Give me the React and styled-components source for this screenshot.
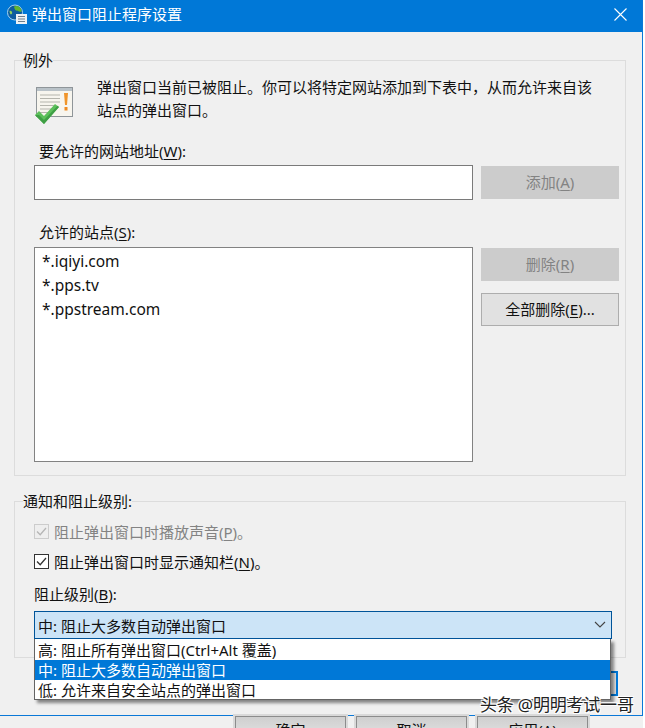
import React from 'react'
import styled, { createGlobalStyle } from 'styled-components'

const Global = createGlobalStyle`
  html, body { margin: 0; padding: 0; background: #fff; }
  body {
    width: 645px;
    height: 728px;
    overflow: hidden;
    font-family: "Noto Sans", "Noto Sans CJK SC", sans-serif;
    font-size: 15px;
    color: #111;
  }
  * { box-sizing: border-box; }
`

const Page = styled.div`
  position: relative;
  width: 645px;
  height: 728px;
  overflow: hidden;
`

const Dialog = styled.div`
  width: 643px;
  height: 716px;
  display: flex;
  flex-direction: column;
  background: #f0f0f0;
  border-right: 1px solid #0a78d7;
  border-bottom: 1px solid #0a78d7;
`

const TitleBar = styled.div`
  height: 32px;
  flex: none;
  display: flex;
  align-items: center;
  gap: 4px;
  padding: 0 15px 4px 7px;
  background: #0078d7;
  color: #fff;
`

const TitleText = styled.div`
  flex: 1;
  line-height: 28px;
`

const TitleIcon = styled.div`
  display: flex;
  width: 21px;
  height: 22px;
  flex: none;
  margin-top: 2px;
`

const Body = styled.div`
  display: flex;
  flex-direction: column;
  padding: 17px 16px 0 14px;
`

const Group = styled.fieldset`
  margin: 0;
  min-width: 0;
  border: 1px solid #dcdcdc;
  padding: ${({ $pad }) => $pad};
  height: ${({ $height }) => $height}px;
  margin-bottom: ${({ $after }) => $after || 0}px;
`

const Legend = styled.legend`
  padding: 0;
  margin-left: -11px;
  height: 22px;
  line-height: 22px;
`

const Intro = styled.div`
  display: flex;
  height: 44px;
`

const IntroIcon = styled.div`
  width: 63px;
  flex: none;
  padding-top: 7px;
`

const IntroText = styled.div`
  line-height: 23px;
  margin-top: -3px;
  width: 500px;
`

const Label = styled.div`
  line-height: 20px;
  margin-left: ${({ $left }) => $left || 0}px;
  margin-top: ${({ $top }) => $top || 0}px;
  margin-bottom: ${({ $bottom }) => $bottom || 0}px;
`

const Key = styled.span`
  text-decoration: underline;
  text-underline-offset: 2px;
  text-decoration-thickness: 1px;
`

const Row = styled.div`
  display: flex;
  gap: 8px;
  align-items: flex-start;
`

const TextBox = styled.div`
  width: 439px;
  height: 35px;
  flex: none;
  background: #fff;
  border: 1px solid #7a7a7a;
`

const ListBox = styled.div`
  width: 439px;
  height: 215px;
  flex: none;
  display: flex;
  flex-direction: column;
  padding: 1px 7px;
  background: #fff;
  border: 1px solid #828282;
`

const Site = styled.div`
  line-height: 24px;
  font-size: 15.5px;
`

const Side = styled.div`
  display: flex;
  flex-direction: column;
  gap: 12px;
  padding-top: 1px;
`

const Button = styled.div`
  width: 138px;
  height: 33px;
  display: flex;
  align-items: center;
  justify-content: center;
  padding-bottom: 2px;
  background: ${({ $off }) => ($off ? '#cccccc' : '#e1e1e1')};
  border: 1px solid ${({ $off }) => ($off ? '#cccccc' : '#adadad')};
  color: ${({ $off }) => ($off ? '#838383' : '#111')};
`

const CheckRow = styled.div`
  display: flex;
  align-items: center;
  gap: 5px;
  height: 16px;
  margin-bottom: ${({ $after }) => $after}px;
  color: ${({ $off }) => ($off ? '#838383' : '#111')};
`

const CheckBox = styled.div`
  width: 15px;
  height: 15px;
  flex: none;
  display: flex;
  align-items: center;
  justify-content: center;
  background: ${({ $off }) => ($off ? '#eeeeee' : '#fff')};
  border: 1px solid ${({ $off }) => ($off ? '#cccccc' : '#333')};
`

const ComboWrap = styled.div`
  position: relative;
  width: 578px;
`

const Combo = styled.div`
  height: 28px;
  display: flex;
  align-items: center;
  justify-content: space-between;
  padding: 0 5px 0 3px;
  background: #cce4f7;
  border: 1px solid #005499;
`

const Dropdown = styled.div`
  position: absolute;
  top: 28px;
  left: 0;
  width: 577px;
  height: 61px;
  display: flex;
  flex-direction: column;
  padding-top: 1px;
  background: #fff;
  border: 1px solid #646464;
  border-top: none;
  box-shadow: 3px 3px 3px rgba(0, 0, 0, 0.45);
  z-index: 2;
`

const Option = styled.div`
  height: 20px;
  flex: none;
  line-height: 20px;
  padding-left: 3px;
  background: ${({ $active }) => ($active ? '#0078d7' : 'transparent')};
  color: ${({ $active }) => ($active ? '#fff' : '#111')};
`

const Footer = styled.div`
  display: flex;
  justify-content: flex-end;
  padding: 13px 8px 0 0;
`

const DefaultButton = styled.div`
  width: 110px;
  height: 25px;
  background: #e1e1e1;
  border: 2px solid #0078d7;
`

const Behind = styled.div`
  height: 12px;
  width: 643px;
  display: flex;
  justify-content: flex-end;
  gap: 10px;
  padding-right: 55px;
  background: #f0f0f0;
`

const BehindButton = styled.div`
  width: 111px;
  height: 24px;
  padding-top: 3px;
  text-align: center;
  line-height: 20px;
  background: linear-gradient(#cfcfcf, #e4e4e4);
  border: 1px solid #8c8c8c;
  box-shadow: 0 0 0 2px #d9d9d9;
`

const Watermark = styled.div`
  position: absolute;
  left: 480px;
  top: 693px;
  font-size: 17px;
  letter-spacing: -0.2px;
  line-height: 24px;
  color: #222;
  white-space: nowrap;
  text-shadow: 1px 1px 0 #fff, -1px -1px 0 #fff, 1px -1px 0 #fff, -1px 1px 0 #fff;
  z-index: 3;
`

const GlobeIcon = () => (
  <svg width="21" height="22" viewBox="0 0 21 22">
    <circle cx="8" cy="8.500" r="7.500" fill="#0d5c9e" stroke="#a9d4ee" strokeWidth="1" />
    <path d="M7 2.500c2-1 4-.5 5.500.5 1.500 1.500 2 3 2 4.500-2 .5-3 0-4-1-1 .5-2 0-2.500-1-.5-1-1-2-1-3z" fill="#62b52f" />
    <path d="M2.500 7c1-.5 2 0 2.500 1s0 2-1 2.500C3 10 2.500 8.500 2.500 7z" fill="#8ccf5a" />
    <path d="M9 10h11v10H9z" fill="#eef2f4" />
    <path d="M11 12.500h7M11 15h7M11 17.500h7" stroke="#6f7f8b" strokeWidth="1" />
  </svg>
)

const CloseIcon = () => (
  <svg width="13" height="13" viewBox="0 0 13 13">
    <path d="M.5.500l12 12M12.500.500l-12 12" stroke="#fff" strokeWidth="1.100" fill="none" />
  </svg>
)

const PopupIcon = () => (
  <svg width="42" height="42" viewBox="0 0 42 42">
    <rect x="2.500" y="1.500" width="36" height="29" fill="#f7f5ee" stroke="#8f9599" />
    <rect x="3" y="2" width="35" height="3" fill="#b9c2c8" />
    <path d="M6 9h20M6 12.500h20M6 16h20M6 19.500h16M6 23h12M6 26.500h8" stroke="#b5b5ad" strokeWidth="1" />
    <path d="M30 7h4l-1 12h-2z" fill="#f0952a" />
    <rect x="30.500" y="21" width="3" height="3.500" fill="#ef8a1f" />
    <path d="M1 29l4-4 5 5 11-12 4 3-15 17z" fill="#5cc05a" />
    <path d="M10 38l15-17-1.500-1.200L10 34 5 29l-4 0z" fill="#3f9f45" />
  </svg>
)

const TickIcon = ({ color }) => (
  <svg width="13" height="13" viewBox="0 0 13 13">
    <path d="M2 6.500l3.200 3.200L11 3" stroke={color} strokeWidth="1.300" fill="none" />
  </svg>
)

const ChevronIcon = () => (
  <svg width="12" height="8" viewBox="0 0 12 8">
    <path d="M1 1l5 5 5-5" stroke="#444" strokeWidth="1.100" fill="none" />
  </svg>
)

const sites = ['*.iqiyi.com', '*.pps.tv', '*.ppstream.com']

const App = () => (
  <Page>
    <Global />
    <Dialog>
      <TitleBar>
        <TitleIcon><GlobeIcon /></TitleIcon>
        <TitleText>弹出窗口阻止程序设置</TitleText>
        <CloseIcon />
      </TitleBar>
      <Body>
        <Group $pad="8px 0 0 19px" $height={427} $after={14}>
          <Legend>例外</Legend>
          <Intro>
            <IntroIcon><PopupIcon /></IntroIcon>
            <IntroText>弹出窗口当前已被阻止。你可以将特定网站添加到下表中，从而允许来自该站点的弹出窗口。</IntroText>
          </Intro>
          <Label $left={5} $top={18} $bottom={4}>要允许的网站地址(<Key>W</Key>):</Label>
          <Row>
            <TextBox />
            <Side><Button $off><span>添加(<Key>A</Key>)</span></Button></Side>
          </Row>
          <Label $left={5} $top={22} $bottom={5}>允许的站点(<Key>S</Key>):</Label>
          <Row>
            <ListBox>
              {sites.map((site) => <Site key={site}>{site}</Site>)}
            </ListBox>
            <Side>
              <Button $off><span>删除(<Key>R</Key>)</span></Button>
              <Button><span>全部删除(<Key>E</Key>)...</span></Button>
            </Side>
          </Row>
        </Group>
        <Group $pad="11px 0 0 19px" $height={168}>
          <Legend>通知和阻止级别:</Legend>
          <CheckRow $off $after={14}>
            <CheckBox $off><TickIcon color="#b5b5b5" /></CheckBox>
            <span>阻止弹出窗口时播放声音(<Key>P</Key>)。</span>
          </CheckRow>
          <CheckRow $after={15}>
            <CheckBox><TickIcon color="#333" /></CheckBox>
            <span>阻止弹出窗口时显示通知栏(<Key>N</Key>)。</span>
          </CheckRow>
          <Label $top={11} $bottom={7}>阻止级别(<Key>B</Key>):</Label>
          <ComboWrap>
            <Combo>
              中: 阻止大多数自动弹出窗口
              <ChevronIcon />
            </Combo>
            <Dropdown>
              <Option>高: 阻止所有弹出窗口(Ctrl+Alt 覆盖)</Option>
              <Option $active>中: 阻止大多数自动弹出窗口</Option>
              <Option>低: 允许来自安全站点的弹出窗口</Option>
            </Dropdown>
          </ComboWrap>
        </Group>
        <Footer><DefaultButton /></Footer>
      </Body>
    </Dialog>
    <Behind>
      <BehindButton>确定</BehindButton>
      <BehindButton>取消</BehindButton>
      <BehindButton>应用(A)</BehindButton>
    </Behind>
    <Watermark>头条 @明明考试一哥</Watermark>
  </Page>
)

export default App
